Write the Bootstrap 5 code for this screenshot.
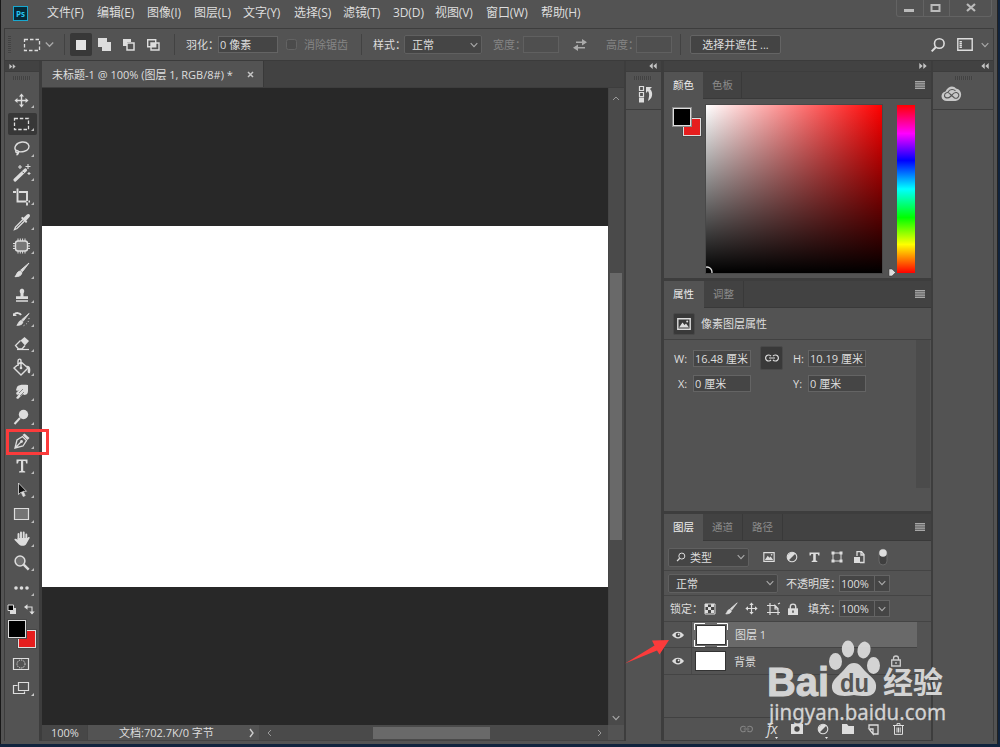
<!DOCTYPE html>
<html lang="zh-CN">
<head>
<meta charset="utf-8">
<title>未标题-1</title>
<link rel="stylesheet" href="https://cdn.jsdelivr.net/npm/bootstrap@5.3.0/dist/css/bootstrap.min.css">
<style>
:root{--pn:#535353;--dk:#424242;--ln:#3d3d3d;--fg:#dedede;--in:#454545}
body{width:1000px;height:747px;overflow:hidden;background:#10233d;font:11px/1 "Open Sans","Noto Sans CJK SC",sans-serif;color:var(--fg)}
svg{display:block;flex:none;overflow:visible}
.window{width:998px;height:744px;border-left:1px solid #181818;border-right:1px solid #222;background:var(--pn)}
.menubar{height:28px;grid-template-columns:34px 50px 50px 47px 49px 51px 49px 50px 42px 51px 55px 355px 1fr;font-size:12px;letter-spacing:-.1px;padding-left:12px;padding-bottom:3px}
.menubar span{white-space:nowrap}
.pslogo{width:15px;height:15px;border:1px solid #18a8d0;background:#052a38;color:#25c4ee;font:bold 8px/13px "Open Sans",sans-serif;text-align:center}
.wctl{height:17px;width:96px;margin-bottom:9px;border:1px solid #636363;border-top:0;border-radius:0 0 3px 3px}
.wctl div+div{border-left:1px solid #636363}
.wctl div{height:16px;width:26px}.wctl div:last-child{width:44px}
.inner{margin-left:3px;width:990px;height:713px;border:1px solid var(--ln)}
.options{height:32px;border-bottom:1px solid #3b3b3b;white-space:nowrap;grid-template-columns:18px 22px 15px 10px 27px 25px 24px 24px 16px 32px 68px 18px 53px 16px 31px 89px 30px 50px 33px 30px 40px 14px 240px 27px 24px 1fr;font-size:11px}
.grip{width:3px;height:18px;margin-left:3px;background:repeating-linear-gradient(#424242 0 1px,#555 1px 2px)}
.hgrip{width:18px;height:4px;background:repeating-linear-gradient(90deg,#424242 0 1px,#555 1px 2px)}
.vsep{width:1px;height:21px;background:#424242}
.fld{background:var(--in);border:1px solid #646464;height:17px;display:flex;align-items:center;white-space:nowrap;padding-left:1px}
.dim{color:#858585}
.fld.off{background:#4f4f4f;border-color:#606060}
.sel{background:var(--in);border:1px solid #606060;border-radius:2px;height:19px;display:flex;align-items:center;justify-content:space-between;padding:0 3px 0 7px}
.selbtn{width:91px;height:19px;background:#444;border:1px solid #646464;border-radius:2px;display:flex;align-items:center;justify-content:center}
.modebtn{width:22px;height:23px;background:#383838;border-radius:2px}
.strip{height:11px;background:var(--dk);border-bottom:1px solid var(--ln)}
.workarea{height:680px;background:var(--ln)}
.workarea>*{flex:none}
.toolcol{width:34px;background:var(--pn)}
.toolcell{height:24.4px;width:34px;padding-left:7px;position:relative}
.toolcell::after{content:"";position:absolute;left:26px;bottom:4px;border-left:3px solid transparent;border-bottom:3px solid #bbb}
.toolcell.active{background:#373737;width:29px;margin-left:3px;padding-left:4px;border-radius:2px;height:22.4px;margin-top:1px;margin-bottom:1px}
.toolcell.active::after{left:23px}
.doc{width:582px;margin-left:3px;background:var(--dk)}
.doctab{width:222px;height:26px;background:#535353;border-right:1px solid #393939;padding:1px 9px 0 10px}
.tabsrow{height:27px;border-bottom:1px solid var(--ln)}
.stage{width:566px;height:637px;background:#282828;padding-top:138px}
.paper{height:361px;background:#fff}
.vscroll{width:16px;height:637px;background:#4a4a4a;border-left:1px solid #454545;padding-right:1px}
.vthumb{width:12px;height:267px;background:#696969}
.status{height:15px;background:#4a4a4a}
.zoomval{width:45px;height:15px;background:#474747;padding-left:9px}
.docinfo{width:172px;height:15px;background:var(--pn);padding:0 4px 0 31px;border-left:1px solid #444}
.hscroll{width:349px;padding:0 6px 0 8px}
.hthumb{width:117px;height:12px;background:#696969}
.minicol{width:35px;margin-left:2px;background:var(--pn)}
.minihead{height:38px;border-bottom:1px solid var(--ln)}
.panels{width:267px;margin-left:3px;background:var(--ln)}
.cloudcol{width:60px;margin-left:2px;background:var(--pn)}
.pgap{height:3px}
.ptabs{height:27px;background:var(--dk);border-bottom:1px solid #393939;font-size:10.5px}
.ptab{height:26px;width:39px;color:#8c8c8c;border-right:1px solid #393939;padding-left:9px}
.ptab.active{height:27px;background:var(--pn);color:#eee;border:0}
.ptab.w{width:40px}
.menuicon{margin:9px 6px 0 auto}
.pbody{background:var(--pn)}
.colorbody{height:179px;padding:6px 0 0 8px}
.swatches{width:34px;height:32px;position:relative;margin-top:3px}
.swatches i{position:absolute;width:18px;height:18px;border:1px solid #ddd;outline:1px solid #484848}
.swatches .bgc{left:10px;top:10px;background:#e61d1d}.swatches .fgc{left:0;top:0;background:#000}
.colorbody .swatches .fgc{outline-color:#8a8a8a}
.colorbody .swatches i{margin-left:1px}
.sv{width:176px;height:168px;background:linear-gradient(to top,#000,transparent),linear-gradient(90deg,#fff,#f00);overflow:hidden;outline:1px solid #484848}
.hue{width:18px;height:168px;margin-left:1px;background:linear-gradient(#f00,#f0f 17%,#00f 33%,#0ff 50%,#0f0 67%,#ff0 83%,#f00)}
.propbody{height:203px}
.prophead{height:32px;border-bottom:1px solid #414141;padding-left:9px}
.picon{width:22px;height:22px;background:#393939;border:1px solid #494949;border-radius:2px}
.picon.linkbtn{width:23px;height:24px;margin-left:1px}
.pgrid{width:252px;grid-template-columns:19px 66px 34px 15px 58px;grid-template-rows:26px 25px;padding:5px 0 0 10px;align-content:start;height:148px}
.sidetrack{width:14px;height:148px;background:#4b4b4b}
.frow{height:30px;border-bottom:1px solid #444;grid-template-columns:89px 6px 23px 23px 22px 23px 24px 1fr;padding:3px 0 0 4px}
.brow{height:25px;border-bottom:1px solid #444;grid-template-columns:118px 53px 36px 15px;padding-left:4px;white-space:nowrap}
.lrow{height:26px;border-bottom:1px solid #444;grid-template-columns:33px 22px 20px 22px 19px 22px 31px 36px 15px;padding-left:6px;white-space:nowrap}
.caret{border-left:0;width:15px;justify-content:center;padding:0}
.layeritem{height:26px;border-bottom:1px solid #444;width:253px}
.layeritem.last{height:27px}
.eyecol{width:28px;height:100%;border-right:1px solid #484848}
.layername{height:100%;padding-left:3px}
.lay-on{background:#696969}
.thumb{width:31px;height:20px;border:1px solid #333;background:#fff}
.layerspace{height:42px}
.footer-icons{height:23px;border-top:1px solid #414141;grid-template-columns:repeat(7,25.3px);padding-left:70px;justify-items:center}
.fx{font-size:14px;letter-spacing:-.5px;line-height:12px}
.toolfg{width:34px;height:32px;margin:2px 0 0 3px}
.overlay{position:absolute;left:0;top:0;width:1000px;height:747px;pointer-events:none}
.mark-pen{position:absolute;left:6px;top:429px;width:43px;height:26px;border:3px solid #fb3b3b}
</style>
</head>
<body>
<svg width="0" height="0" class="position-absolute" aria-hidden="true">
<symbol id="chev" viewBox="0 0 8 6"><path d="M.7 1.2 4 4.6 7.3 1.2" fill="none" stroke="#aaa" stroke-width="1.1"/></symbol>
<symbol id="dl" viewBox="0 0 8 6"><path d="M3.7 0v6L.3 3zM7.7 0v6L4.3 3z" fill="#c4c4c4"/></symbol>
<symbol id="dr" viewBox="0 0 8 6"><path d="M.3 0v6l3.4-3zM4.3 0v6l3.4-3z" fill="#c4c4c4"/></symbol>
<symbol id="burger" viewBox="0 0 10 8"><path d="M0 0h10v8H0z" fill="#6c6c6c"/><path d="M0 .5h10M0 2.8h10M0 5.200h10M0 7.5h10" stroke="#a8a8a8"/></symbol>
<symbol id="loupe" viewBox="0 0 16 16"><circle cx="9.3" cy="6.5" r="4.8" fill="none" stroke="#ddd" stroke-width="1.6"/><path d="m6 10-4.3 4.4" stroke="#ddd" stroke-width="2"/></symbol>
<symbol id="pic" viewBox="0 0 14 12"><path d="M.8.8h12.4v10.4H.8z" fill="none" stroke="#ddd" stroke-width="1.4"/><path d="m2 9.500 3.500-5 2 2.500 1.500-1.500 3 4z" fill="#ddd"/><circle cx="10.2" cy="3.4" r="1" fill="#ddd"/></symbol>
<symbol id="link" viewBox="0 0 14 8"><path d="M6 2.200A3 3 0 1 0 6 5.800M8 2.200a3 3 0 1 1 0 3.600M4 4h6" fill="none" stroke="currentColor" stroke-width="1.2"/></symbol>
<symbol id="half" viewBox="0 0 12 12"><circle cx="6" cy="6" r="4.8" fill="none" stroke="#ddd" stroke-width="1.1"/><path d="M9.500 2.500A5 5 0 0 0 2.500 9.500z" fill="#ddd"/></symbol>
<symbol id="move" viewBox="0 0 16 16"><path d="M8 2v12M2 8h12" stroke="#ddd" stroke-width="1.5"/><path d="m8 .500 2.700 3.200H5.300zM8 15.500l2.700-3.200H5.300zM.5 8l3.200-2.700v5.400zM15.500 8l-3.200-2.700v5.400z" fill="#ddd"/></symbol>
<symbol id="brush" viewBox="0 0 16 16"><path d="M15 1 8.300 9.800 6.600 8.200zM6 9l1.900 1.800C7.500 13.700 4.700 14.700 1 14.700 2.800 13 2.700 9.700 6 9z" fill="#ddd" stroke="#ddd" stroke-width="1"/></symbol>
<symbol id="eye" viewBox="0 0 12 8"><path d="M0 4C3-.5 9-.5 12 4 9 8.500 3 8.500 0 4z" fill="#ddd"/><circle cx="6" cy="4" r="2.300" fill="#484848"/><circle cx="6.600" cy="3.400" r=".9" fill="#eee"/></symbol>
<symbol id="lock" viewBox="0 0 10 12"><path d="M2.300 6V3.800a2.700 2.700 0 0 1 5.400 0V6" fill="none" stroke="#ddd" stroke-width="1.4"/><path d="M0 5.300h10V12H0z" fill="#ddd"/><path d="M5 7.500v2.200" stroke="#444" stroke-width="1.4"/></symbol>
</svg>

<div class="window">
 <header class="menubar d-grid align-items-center">
  <div class="pslogo">Ps</div><span>文件(F)</span><span>编辑(E)</span><span>图像(I)</span><span>图层(L)</span><span>文字(Y)</span><span>选择(S)</span><span>滤镜(T)</span><span>3D(D)</span><span>视图(V)</span><span>窗口(W)</span><span>帮助(H)</span>
  <div class="wctl d-flex"><div><svg width="26" height="16"><path d="M7 10.500h10" stroke="#bbb" stroke-width="3"/></svg></div><div><svg width="25" height="16"><path d="M7.500 5h8v6h-8z" fill="none" stroke="#bbb" stroke-width="2"/></svg></div><div><svg width="44" height="16"><path d="m17 4 8 7m0-7-8 7" stroke="#bbb" stroke-width="2.200"/></svg></div></div>
 </header>
 <div class="inner">
  <div class="options d-grid align-items-center">
   <div class="grip"></div>
   <svg width="18" height="14"><path d="M1.500 1.500h15v11h-15z" fill="none" stroke="#ddd" stroke-width="1.300" stroke-dasharray="3.500 2"/></svg>
   <svg width="9" height="7"><use href="#chev"/></svg>
   <div class="vsep ms-1"></div>
   <div class="modebtn d-flex align-items-center justify-content-center"><svg width="10" height="10"><path d="M0 0h10v10H0z" fill="#e2e2e2"/></svg></div>
   <svg width="15" height="14"><path d="M1 0h9v4h4v9H5V9H1z" fill="#ddd"/></svg>
   <svg width="14" height="14"><path d="M1 1h8v3H5v4H1z" fill="#ddd"/><path d="M5 5h7v7H5z" fill="none" stroke="#ddd" stroke-width="1.500"/></svg>
   <svg width="15" height="14"><path d="M1.700 1.700h8v7h-8zM5 5h8v7H5z" fill="none" stroke="#ddd" stroke-width="1.400"/><path d="M5 5h4v4H5z" fill="#ddd"/></svg>
   <div class="vsep ms-1"></div>
   <span>羽化：</span><div class="fld" style="width:60px">0 像素</div>
   <svg width="12" height="12"><rect x=".5" y=".5" width="10" height="10" rx="2" fill="#4b4b4b" stroke="#636363"/></svg><span class="dim">消除锯齿</span>
   <div class="vsep ms-1"></div><span>样式：</span>
   <div class="sel" style="width:78px">正常<svg width="8" height="6"><use href="#chev"/></svg></div>
   <span class="dim">宽度：</span><div class="fld off" style="width:36px"></div>
   <svg width="14" height="12"><path d="M3 3.300h7M4 8.700h8" stroke="#aaa" stroke-width="1.600"/><path d="m9 0 5 3.300-5 3.300zM5 5.400v6.600L0 8.700z" fill="#aaa"/></svg>
   <span class="dim">高度：</span><div class="fld off" style="width:36px"></div>
   <div class="vsep ms-1"></div><div class="selbtn">选择并遮住 ...</div>
   <svg width="16" height="16"><use href="#loupe"/></svg>
   <svg width="16" height="13"><path d="M.8.800h14.400v11.400H.8z" fill="none" stroke="#ddd" stroke-width="1.400"/><path d="M3.700 3v7.500" stroke="#ddd" stroke-width="2.400" stroke-dasharray="1.400 .5"/></svg>
   <svg width="8" height="6"><use href="#chev"/></svg>
  </div>

  <main class="workarea d-flex">
   <aside class="toolcol">
    <div class="strip ps-1 d-flex align-items-center"><svg width="7" height="5"><use href="#dr"/></svg></div>
    <div class="hgrip mx-auto mt-1" style="margin-bottom:7.5px"></div>
    <div class="toolcell d-flex align-items-center"><svg width="20" height="20"><use href="#move" x="2" y="3" width="15" height="15"/></svg></div>
    <div class="toolcell active d-flex align-items-center"><svg width="20" height="20"><path d="M2.500 4.500h14v11h-14z" fill="none" stroke="#ddd" stroke-width="1.300" stroke-dasharray="3.500 1.800"/></svg></div>
    <div class="toolcell d-flex align-items-center"><svg width="20" height="20"><path d="M4.500 13C1 10 4 4.500 10 4s8 3.500 6.500 6.500S9 14.500 6 13.500M6 13c-2-1.500-3 .8-1.500 1.500s3-1 1.500-1.500c1 2 .5 3-1.500 4" fill="none" stroke="#ddd" stroke-width="1.400"/></svg></div>
    <div class="toolcell d-flex align-items-center"><svg width="20" height="20"><path d="m3 17 10.500-10" stroke="#ddd" stroke-width="3.200" stroke-linecap="round"/><path d="m10.500 8.700 1.500 1.500" stroke="#555"/><path d="M8 2v4M6 4h4M16 1v5M13.500 3.500h5M17 9v3M15.500 10.500h3" stroke="#ddd" stroke-width="1.100"/></svg></div>
    <div class="toolcell d-flex align-items-center"><svg width="20" height="20"><path d="M5.500 1.500v13h9M1 5h3M7 5h8v9M15 15.500v3M16.500 14.500H18" fill="none" stroke="#ddd" stroke-width="1.900"/></svg></div>
    <div class="toolcell d-flex align-items-center"><svg width="20" height="20"><path d="m11 7.500-7.500 7.500-1 2.500 2.500-1 7.500-7.500" fill="none" stroke="#ddd" stroke-width="1.300"/><path d="m9 6 1.300-1.300 1.200 1L15 2.500c2-1.500 4 .5 2.500 2.500l-3.200 3.500 1 1.200-1.300 1.300z" fill="#ddd"/></svg></div>
    <div class="toolcell d-flex align-items-center"><svg width="20" height="20"><rect x="3.500" y="5" width="12" height="10" rx="2.500" fill="#777" stroke="#ddd" stroke-width="1.400"/><path d="M6 2.500V5m2.300-2.500V5m2.300-2.500V5M13 2.500V5M6 15v2.500M8.300 15v2.500m2.300-2.500v2.500M13 15v2.500M1 7.500h2.500M1 10h2.500M1 12.500h2.500m12-5H18M15.500 10H18m-2.500 2.500H18" stroke="#ddd"/></svg></div>
    <div class="toolcell d-flex align-items-center"><svg width="20" height="20"><use href="#brush" x="2" y="2" width="16" height="16"/></svg></div>
    <div class="toolcell d-flex align-items-center"><svg width="20" height="20"><path d="M8.500 8.500C5 2 15 2 11.500 8.500v2.700h4.500V14H4v-2.800h4.500z" fill="#ddd"/><path d="M4 16h12" stroke="#ddd" stroke-width="1.500"/></svg></div>
    <div class="toolcell d-flex align-items-center"><svg width="20" height="20"><use href="#brush" x="4" y="3" width="14" height="15"/><path d="M2 6c2-3 6-2 7 0" fill="none" stroke="#ddd" stroke-width="2"/><path d="m1 4 4 3H1z" fill="#ddd"/><path d="M17 9c0 4-2 6-6 8" fill="none" stroke="#ccc" stroke-dasharray="1 2"/></svg></div>
    <div class="toolcell d-flex align-items-center"><svg width="20" height="20"><path d="m8.500 6.500 4-3.500 4.500 4-4 4.500z" fill="#ddd"/><path d="m8.500 6.500-5 5 3 3.500h3.500l3-3.500" fill="none" stroke="#ddd" stroke-width="1.300"/><path d="M5 15.500h12" stroke="#ddd" stroke-width="1.200"/></svg></div>
    <div class="toolcell d-flex align-items-center"><svg width="20" height="20"><path d="m2 10 7-6 7 6-7 7zM9 10V3c0-3-3-2-3 0v5" fill="none" stroke="#ddd" stroke-width="1.400"/><path d="M14 8c4-1 5 3 4 7-2 1-3-1-2-4z" fill="#ddd"/><circle cx="9" cy="10" r="1.300" fill="#ddd"/></svg></div>
    <div class="toolcell d-flex align-items-center"><svg width="20" height="20"><path d="M5 5c2-3 8-2 11-2v6c0 3-2 4-4 4l-1-1-2 2-3 3-2-1 3-4-2 1-1-2 3-3-2 1-1-1z" fill="#ddd"/><path d="m7 11 4-4M8 14l4-4" stroke="#666" stroke-width=".7"/></svg></div>
    <div class="toolcell d-flex align-items-center"><svg width="20" height="20"><circle cx="11.500" cy="7.500" r="4.700" fill="#ddd"/><path d="m8 11-5.500 6" stroke="#ddd" stroke-width="2"/></svg></div>
    <div class="toolcell d-flex align-items-center"><svg width="20" height="20"><path d="M3 17 5 9l5.500-3.500 4 4L11 15zM3 17l6-6" fill="none" stroke="#ddd" stroke-width="1.300"/><path d="m10.500 4 2-1.500 5 4.500-2 2z" fill="#ddd"/><circle cx="9.500" cy="10.500" r="1.400" fill="#ddd"/></svg></div>
    <div class="toolcell d-flex align-items-center"><svg width="20" height="20"><path d="M4.500 3.500h11v4h-1.300L13.500 5H11.200v9.700l2 .7v1H7v-1l2-.7V5H6.700L6 7.500H4.500z" fill="#ddd"/></svg></div>
    <div class="toolcell d-flex align-items-center"><svg width="20" height="20"><path d="M6.500 3v11.500l2.700-2.400 2 4.400 2-.9-2-4.300h3.300z" fill="#111" stroke="#ddd" stroke-width=".8"/><path d="m9.200 12 2 4.500 2-.9-2-4.300" fill="#ddd"/></svg></div>
    <div class="toolcell d-flex align-items-center"><svg width="20" height="20"><path d="M2.500 4.500h14v11h-14z" fill="#747474" stroke="#ddd" stroke-width="1.200"/></svg></div>
    <div class="toolcell d-flex align-items-center"><svg width="20" height="20"><path d="M6.500 10V5M9 9V3.500M11.700 9V3.500M14.300 10V5.500" stroke="#ddd" stroke-width="1.900" stroke-linecap="round"/><path d="M5.600 9h9.600l1-.8c1-.5 2 .3 1.200 1.300L14 15.500c-1 1.500-5.500 1.800-7 0L2.600 11c-.6-1.500 1-2 3-.3z" fill="#ddd"/></svg></div>
    <div class="toolcell d-flex align-items-center"><svg width="20" height="20"><circle cx="8" cy="8" r="4.900" fill="#707070" stroke="#ddd" stroke-width="1.500"/><path d="m11.700 11.700 5 5" stroke="#ddd" stroke-width="2.500"/></svg></div>
    <div class="toolcell d-flex align-items-center"><svg width="20" height="20"><g fill="#ddd"><circle cx="4" cy="10" r="1.800"/><circle cx="9.500" cy="10" r="1.800"/><circle cx="15" cy="10" r="1.800"/></g></svg></div>
    <svg width="34" height="18"><path d="M5 8h6v6H5z" fill="#ddd"/><path d="M3 5h5.500v5.500H3z" fill="#000" stroke="#ddd"/><path d="M22 7h5v6M21 7h3M27 11v3" fill="none" stroke="#ddd" stroke-width="1.100"/><path d="m19 7 3.500-2.700v5.400zM27 14.500l-2.700-3h5.400z" fill="#ddd"/></svg>
    <div class="toolfg"><div class="swatches mt-0"><i class="bgc"></i><i class="fgc"></i></div></div>
    <svg width="34" height="46"><path d="M8.500 6.500h15v11h-15z" fill="none" stroke="#ddd" stroke-width="1.200"/><circle cx="16" cy="12" r="4" fill="none" stroke="#ddd" stroke-dasharray="1.300 1"/><path d="M12.500 33.500h-4v8h11v-2" fill="none" stroke="#ddd" stroke-width="1.200"/><path d="M13.500 30.500h10v8h-10z" fill="#535353" stroke="#ddd" stroke-width="1.200"/><path d="M29 41v3h-3z" fill="#ccc"/></svg>
   </aside>

   <section class="doc">
    <div class="tabsrow"><div class="doctab d-flex align-items-center justify-content-between"><span>未标题-1 @ 100% (图层 1, RGB/8#) *</span><svg width="7" height="7"><path d="m1 1 5 5m0-5L1 6" stroke="#c5c5c5" stroke-width="1.500"/></svg></div></div>
    <div class="d-flex"><div class="stage"><div class="paper"></div></div>
     <div class="vscroll d-flex flex-column align-items-center"><svg width="8" height="6" style="margin-top:7px"><path d="M1 5 4 2l3 3" fill="none" stroke="#999"/></svg><div class="vthumb" style="margin-top:172px"></div><svg width="8" height="6" class="mt-auto mb-1"><use href="#chev"/></svg></div></div>
    <div class="status d-flex align-items-center"><div class="zoomval d-flex align-items-center">100%</div><div class="docinfo d-flex align-items-center justify-content-between"><span>文档:702.7K/0 字节</span><svg width="6" height="10"><path d="m1 1 3 4-3 4" fill="none" stroke="#ccc" stroke-width="1.400"/></svg></div>
     <div class="hscroll d-flex align-items-center"><svg width="5" height="8"><path d="M4 1 1 4l3 3" fill="none" stroke="#999"/></svg><div class="hthumb" style="margin-left:101px"></div><svg width="5" height="8" class="ms-auto"><path d="m1 1 3 3-3 3" fill="none" stroke="#999"/></svg></div><div class="flex-fill h-100 pbody"></div></div>
   </section>

   <aside class="minicol"><div class="strip d-flex align-items-center justify-content-end pe-1"><svg width="8" height="6"><use href="#dl"/></svg></div>
    <div class="minihead pt-1 ps-2"><div class="hgrip"></div><svg width="18" height="20" style="margin:5px 0 0 2px"><path d="M3.500 1.500h4v4h-4zM3.500 7.500h4v4h-4z" fill="none" stroke="#ddd" stroke-width="1.200"/><path d="M3 12.500h5v5H3z" fill="#ddd"/><path d="M10 2h6l-2 2c4 4 2 10-2 12 1-4 2-7 0-10l-2 2z" fill="#ddd"/></svg></div>
   </aside>

   <section class="panels">
    <div class="strip d-flex align-items-center justify-content-end pe-1"><svg width="8" height="6"><use href="#dr"/></svg></div>
    <div class="ptabs d-flex"><div class="ptab active d-flex align-items-center">颜色</div><div class="ptab d-flex align-items-center">色板</div><svg width="10" height="8" class="menuicon"><use href="#burger"/></svg></div>
    <div class="pbody colorbody d-flex"><div class="swatches"><i class="bgc"></i><i class="fgc"></i></div><div class="sv"><svg width="176" height="168"><circle cx="1" cy="167" r="5" fill="none" stroke="#ddd" stroke-width="1.300"/></svg></div><svg width="8" height="8" style="margin:163px 0 0 6px"><path d="M1 1h3l3.500 3.500L4 8H1z" fill="#ddd" stroke="#333" stroke-width=".5"/></svg><div class="hue"></div></div>
    <div class="pgap"></div>
    <div class="ptabs d-flex"><div class="ptab active w d-flex align-items-center">属性</div><div class="ptab w d-flex align-items-center">调整</div><svg width="10" height="8" class="menuicon"><use href="#burger"/></svg></div>
    <div class="pbody propbody"><div class="prophead d-flex align-items-center gap-2"><div class="picon d-flex align-items-center justify-content-center"><svg width="14" height="12"><use href="#pic"/></svg></div><span style="margin-left:-2px">像素图层属性</span></div>
     <div class="d-flex"><div class="pgrid d-grid align-items-center"><span>W:</span><div class="fld" style="width:58px">16.48 厘米</div><div class="picon linkbtn d-flex align-items-center justify-content-center"><svg width="14" height="8"><use href="#link"/></svg></div><span>H:</span><div class="fld" style="width:58px">10.19 厘米</div><span class="ps-1">X:</span><div class="fld" style="width:58px">0 厘米</div><span></span><span>Y:</span><div class="fld" style="width:58px">0 厘米</div></div><div class="sidetrack"></div></div>
    </div>
    <div class="pgap"></div>
    <div class="ptabs d-flex"><div class="ptab active d-flex align-items-center">图层</div><div class="ptab w d-flex align-items-center">通道</div><div class="ptab w d-flex align-items-center">路径</div><svg width="10" height="8" class="menuicon"><use href="#burger"/></svg></div>
    <div class="pbody">
     <div class="frow d-grid align-items-center"><div class="sel" style="width:81px"><span class="d-flex gap-1 align-items-center"><svg width="10" height="10"><use href="#loupe"/></svg>类型</span><svg width="8" height="6"><use href="#chev"/></svg></div><span></span>
      <svg width="12" height="10"><use href="#pic"/></svg><svg width="12" height="12"><use href="#half"/></svg>
      <svg width="11" height="10"><path d="M.5.500h10v3H9.300L8.700 2H6.800v6.500l1.500.500v1H2.700V9l1.500-.5V2H2.300l-.6 1.500H.5z" fill="#ddd"/></svg>
      <svg width="12" height="12"><path d="M2 2h8v8H2z" fill="none" stroke="#ddd"/><path d="M.5.500h3v3h-3zM8.500.500h3v3h-3zM.5 8.500h3v3h-3zM8.500 8.500h3v3h-3z" fill="#ddd"/></svg>
      <svg width="12" height="13"><path d="M3 5V.700h4.500L10 3.500v8H6M7 .700V4h3" fill="none" stroke="#ddd" stroke-width="1.300"/><path d="M0 6h6v6H0z" fill="#ddd"/></svg>
      <svg width="10" height="18"><rect x="1" y="1" width="8" height="16" rx="4" fill="#3f3f3f" stroke="#666"/><circle cx="5" cy="5" r="3.800" fill="#ddd"/></svg></div>
     <div class="brow d-grid align-items-center"><div class="sel" style="width:110px">正常<svg width="8" height="6"><use href="#chev"/></svg></div><span>不透明度：</span><div class="fld">100%</div><div class="fld caret"><svg width="8" height="6"><use href="#chev"/></svg></div></div>
     <div class="lrow d-grid align-items-center"><span>锁定：</span><svg width="14" height="12"><path d="M2 1h10v10H2z" fill="#444" stroke="#ddd"/><path d="M2 1h3v3H2zM8 1h3v3H8zM5 4h3v3H5zM2 7h3v3H2zM8 7h3v3H8z" fill="#ddd"/></svg><svg width="13" height="13"><use href="#brush"/></svg><svg width="13" height="13"><use href="#move"/></svg><svg width="14" height="12"><path d="M3 0v12M0 2.500h8M0 9.500h13M11 5v7M8 2.500l3 3V6H8zM11 1l2-1" fill="none" stroke="#ddd" stroke-width="1.200"/></svg><svg width="10" height="12" style="margin-left:2px"><use href="#lock"/></svg><span>填充：</span><div class="fld">100%</div><div class="fld caret"><svg width="8" height="6"><use href="#chev"/></svg></div></div>
     <div class="layeritem d-flex"><div class="eyecol d-flex align-items-center justify-content-center"><svg width="12" height="8"><use href="#eye"/></svg></div><div class="layername lay-on flex-fill d-flex align-items-center gap-2"><svg width="32" height="24"><path d="M1.500 2.500h29v19h-29z" fill="#fff" stroke="#333"/><path d="M-.5 7V.500H10M22 .500h10.500V7M-.5 17v6.500H10M22 23.500h10.500V17" fill="none" stroke="#fff"/></svg><span>图层 1</span></div></div>
     <div class="layeritem last d-flex"><div class="eyecol d-flex align-items-center justify-content-center"><svg width="12" height="8"><use href="#eye"/></svg></div><div class="layername flex-fill d-flex align-items-center gap-2"><div class="thumb"></div><span>背景</span><svg width="10" height="12" style="margin-left:127px"><path d="M2.500 5V3.500a2.500 2.500 0 0 1 5 0V5M.7 5h8.600v6H.7zM5 7v2" fill="none" stroke="#ccc" stroke-width="1.300"/></svg></div></div>
     <div class="layerspace"></div>
     <div class="footer-icons d-grid align-items-center">
      <svg width="13" height="8" class="dim"><use href="#link"/></svg><i class="fx">fx</i>
      <svg width="12" height="10"><path d="M0 0h12v10H0z" fill="#ddd"/><circle cx="6" cy="5" r="2.700" fill="#484848"/><path d="M-16 13h3l-1.500 2zM34 13h3l-1.500 2z" fill="#eee"/></svg>
      <svg width="12" height="12"><use href="#half"/></svg>
      <svg width="12" height="10"><path d="M0 0h5l1.500 2H12v8H0z" fill="#ddd"/></svg>
      <svg width="11" height="11"><path d="M1 4V1h9v9H5M1 5h4v5z" fill="none" stroke="#ddd" stroke-width="1.300"/></svg>
      <svg width="11" height="12"><path d="M0 2.500h11M4 2V.600h3V2M1.500 3v8.400h8V3M4 4.500v5M5.500 4.500v5M7.200 4.500v5" fill="none" stroke="#ddd"/></svg>
     </div>
    </div>
   </section>
   <aside class="cloudcol"><div class="strip d-flex align-items-center justify-content-end pe-1"><svg width="8" height="6"><use href="#dl"/></svg></div>
    <div class="minihead pt-1 ps-2"><div class="hgrip" style="margin-left:14px"></div><svg width="21" height="16" style="margin-top:6px"><path d="M6 15C-.5 15-1.500 7 4.500 5.500 7-.5 13-.5 15 2.500 22 3.500 22 14 14.500 15z" fill="#c8c8c8"/><path d="m9 8 4.500 4c4.500 1.500 6-4.500 2-5.500-3-.5-4 2-6 4s-6 2-6-1S7 5.500 9 8l2 2M7 6c2-3.500 6-3 7.500-1" fill="none" stroke="#555" stroke-width="1.100"/></svg></div>
   </aside>
  </main>
 </div>
</div>
<div class="mark-pen"></div>
<svg class="overlay" viewBox="0 0 1000 747">
 <path d="M625 663.500 654.500 645.500l-2.500-5 17-.5-9.500 14.500-2.500-4z" fill="#fb3b3b"/>
 <g fill="#dcdcdc" opacity=".94">
  <text x="767" y="696" font-family="Liberation Sans" font-weight="700" font-size="41" textLength="62" lengthAdjust="spacingAndGlyphs" stroke="#dcdcdc">Bai</text>
  <ellipse cx="835.500" cy="661.500" rx="6.500" ry="8.500"/><ellipse cx="848" cy="649" rx="6.200" ry="8.500"/><ellipse cx="864" cy="650" rx="6.500" ry="8.500" transform="rotate(12 864 650)"/><ellipse cx="873.500" cy="665.500" rx="6.500" ry="8.500"/>
  <path d="M854 663c6 0 8 5 12 9 5 5 11 8 10 16-1 9-10 9-22 7-12 2-21 1-22-7-1-7 5-11 10-16 4-4 6-9 12-9z"/>
  <text x="883" y="693" font-family="Noto Sans CJK SC" font-weight="700" font-size="30" textLength="60">经验</text>
  <text x="769" y="720" font-family="Noto Sans" font-size="21" textLength="177" lengthAdjust="spacingAndGlyphs" stroke="#dcdcdc" stroke-width=".3">jingyan.baidu.com</text>
 </g>
 <text x="840" y="692" font-family="Liberation Sans" font-weight="700" font-size="25" textLength="29" lengthAdjust="spacingAndGlyphs" fill="#555">du</text>
</svg>
<script src="https://cdn.jsdelivr.net/npm/bootstrap@5.3.0/dist/js/bootstrap.bundle.min.js"></script>
</body>
</html>
